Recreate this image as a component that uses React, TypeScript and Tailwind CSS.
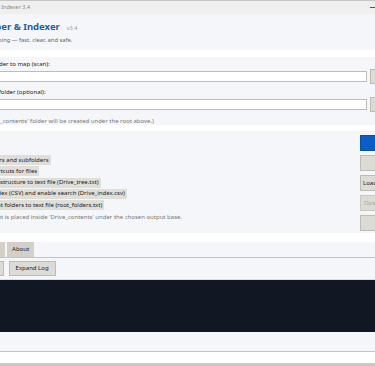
const font = "font-['Noto_Sans','Open_Sans',sans-serif]"

const options = [
  { text: 'Map folders and subfolders', shift: 'ml-[-40px]' },
  { text: 'Make shortcuts for files', shift: 'ml-[-40px]' },
  { text: 'Save folder structure to text file (Drive_tree.txt)', shift: 'ml-[-44px]' },
  { text: 'Build file index (CSV) and enable search (Drive_index.csv)', shift: 'ml-[-45px]' },
  { text: 'Export root folders to text file (root_folders.txt)', shift: 'ml-[-40px]' },
]

const actions = [
  { label: 'Start', tone: 'primary' },
  { label: 'Stop', tone: 'normal' },
  { label: 'Load settings', tone: 'normal' },
  { label: 'Open output', tone: 'disabled' },
  { label: 'Exit', tone: 'normal' },
]

function FolderRow({ label, shift }: { label: string; shift: string }) {
  return (
    <>
      <div className={`${shift} h-[8px] text-[6px] leading-[8px] text-[#222] whitespace-nowrap`}>{label}</div>
      <div className="mt-[1px] flex h-[15px] items-center">
        <div className="h-[11px] flex-1 border border-[#bcbcbc] bg-white" />
        <button className="ml-[3px] h-[15px] w-[44px] border border-[#bdbbb6] bg-[#dddbd6] text-[6px] text-[#222]">
          Browse…
        </button>
      </div>
    </>
  )
}

export default function App() {
  return (
    <div className={`${font} relative flex h-[366px] w-[375px] flex-col overflow-hidden bg-[#c8c8c8]`}>
      <div className="h-px shrink-0 bg-[#c6c6c6]" />

      {/* window caption */}
      <div className="flex h-[13px] shrink-0 items-center justify-between bg-[#efefef]">
        <span className="ml-[-41px] whitespace-nowrap text-[5.5px] text-[#8a8a8a]">Drive Mapper &amp; Indexer 3.4</span>
        <span className="h-px w-[5px] bg-[#555]" />
      </div>

      {/* header */}
      <div className="h-[36px] shrink-0 bg-[#f5f6fa] pt-[7px]">
        <div className="ml-[-53px] flex items-baseline gap-[7px] whitespace-nowrap">
          <span className="text-[9.5px] font-bold leading-[12px] text-[#1d5fa6]">Drive Mapper &amp; Indexer</span>
          <span className="text-[5.5px] text-[#9a9a9a]">v3.4</span>
        </div>
        <div className="ml-[-30px] mt-[3px] whitespace-nowrap text-[5.8px] leading-[8px] text-[#666]">
          Drive mapping — fast, clear, and safe.
        </div>
      </div>

      <div className="h-[7px] shrink-0 bg-white" />

      {/* folders */}
      <div className="h-[68px] shrink-0 bg-[#f5f6fa] pt-[3px]">
        <div className="ml-[-21px] w-[435px]">
          <FolderRow label="Root folder to map (scan):" shift="ml-[-2px]" />
          <div className="h-[4px]" />
          <FolderRow label="Output folder (optional):" shift="ml-[-2px]" />
          <div className="ml-[-9px] mt-[5px] whitespace-nowrap text-[6px] leading-[8px] text-[#777]">
            (The 'Drive_contents' folder will be created under the root above.)
          </div>
        </div>
      </div>

      <div className="h-[6px] shrink-0 bg-white" />

      {/* options */}
      <div className="flex h-[102px] shrink-0 bg-[#f5f6fa]">
        <div className="flex-1 pt-[24px]">
          <div className="flex flex-col gap-[1.25px]">
            {options.map((o) => (
              <label key={o.text} className={`${o.shift} flex h-[10px] w-fit items-center gap-[3px] bg-[#e0ded9] pr-[2px] whitespace-nowrap text-[6px] text-[#1a1a1a]`}>
                <span className="h-[7px] w-[7px] border border-[#777] bg-white" />
                <span className="ml-[1px]">{o.text}</span>
              </label>
            ))}
          </div>
          <div className="ml-[-17px] mt-[3px] whitespace-nowrap text-[6px] leading-[8px] text-[#777]">
            Output is placed inside 'Drive_contents' under the chosen output base.
          </div>
        </div>
        <div className="flex w-[15px] flex-col gap-[4px] pt-[4px]">
          {actions.map((a) => (
            <button
              key={a.label}
              className={
                a.tone === 'primary'
                  ? 'h-[16px] w-[44px] shrink-0 whitespace-nowrap border border-[#0a4fa8] bg-[#0b5ec6] text-center text-[6px] text-white'
                  : a.tone === 'disabled'
                    ? 'h-[16px] w-[44px] shrink-0 whitespace-nowrap border border-[#c9c7c2] bg-[#dddbd6] text-center text-[6px] text-[#a9a9a9]'
                    : 'h-[16px] w-[44px] shrink-0 whitespace-nowrap border border-[#bdbbb6] bg-[#dddbd6] text-center text-[6px] text-[#1a1a1a]'
              }
            >
              {a.label}
            </button>
          ))}
        </div>
      </div>

      <div className="h-[9px] shrink-0 bg-white" />

      {/* tabs */}
      <div className="flex h-[16px] shrink-0 items-end border-b border-[#c2c2c2] bg-[#f5f6fa]">
        <div className="ml-[-19px] flex gap-[2px]">
          <div className="flex h-[15px] items-center bg-[#d2d0c9] px-[5px] text-[6px] text-[#1a1a1a]">Main</div>
          <div className="flex h-[15px] items-center bg-[#d2d0c9] px-[5px] text-[6px] text-[#1a1a1a]">About</div>
        </div>
      </div>

      <div className="flex h-[22px] shrink-0 items-center border-b border-[#dedede] bg-[#f5f6fa]">
        <div className="ml-[-37px] flex gap-[5px]">
          <button className="h-[15px] border border-[#bdbbb6] bg-[#dddbd6] px-[6px] text-[6px] text-[#1a1a1a] whitespace-nowrap">Clear Log</button>
          <button className="h-[15px] border border-[#bdbbb6] bg-[#dddbd6] px-[6px] text-[6px] text-[#1a1a1a] whitespace-nowrap">Expand Log</button>
        </div>
      </div>

      {/* log */}
      <div className="h-[52px] shrink-0 bg-[#111823]" />

      <div className="h-[19px] shrink-0 bg-[#f5f6fa]" />
      <div className="h-px shrink-0 bg-[#c4c4c4]" />
      <div className="h-[11px] shrink-0 bg-white" />
    </div>
  )
}
